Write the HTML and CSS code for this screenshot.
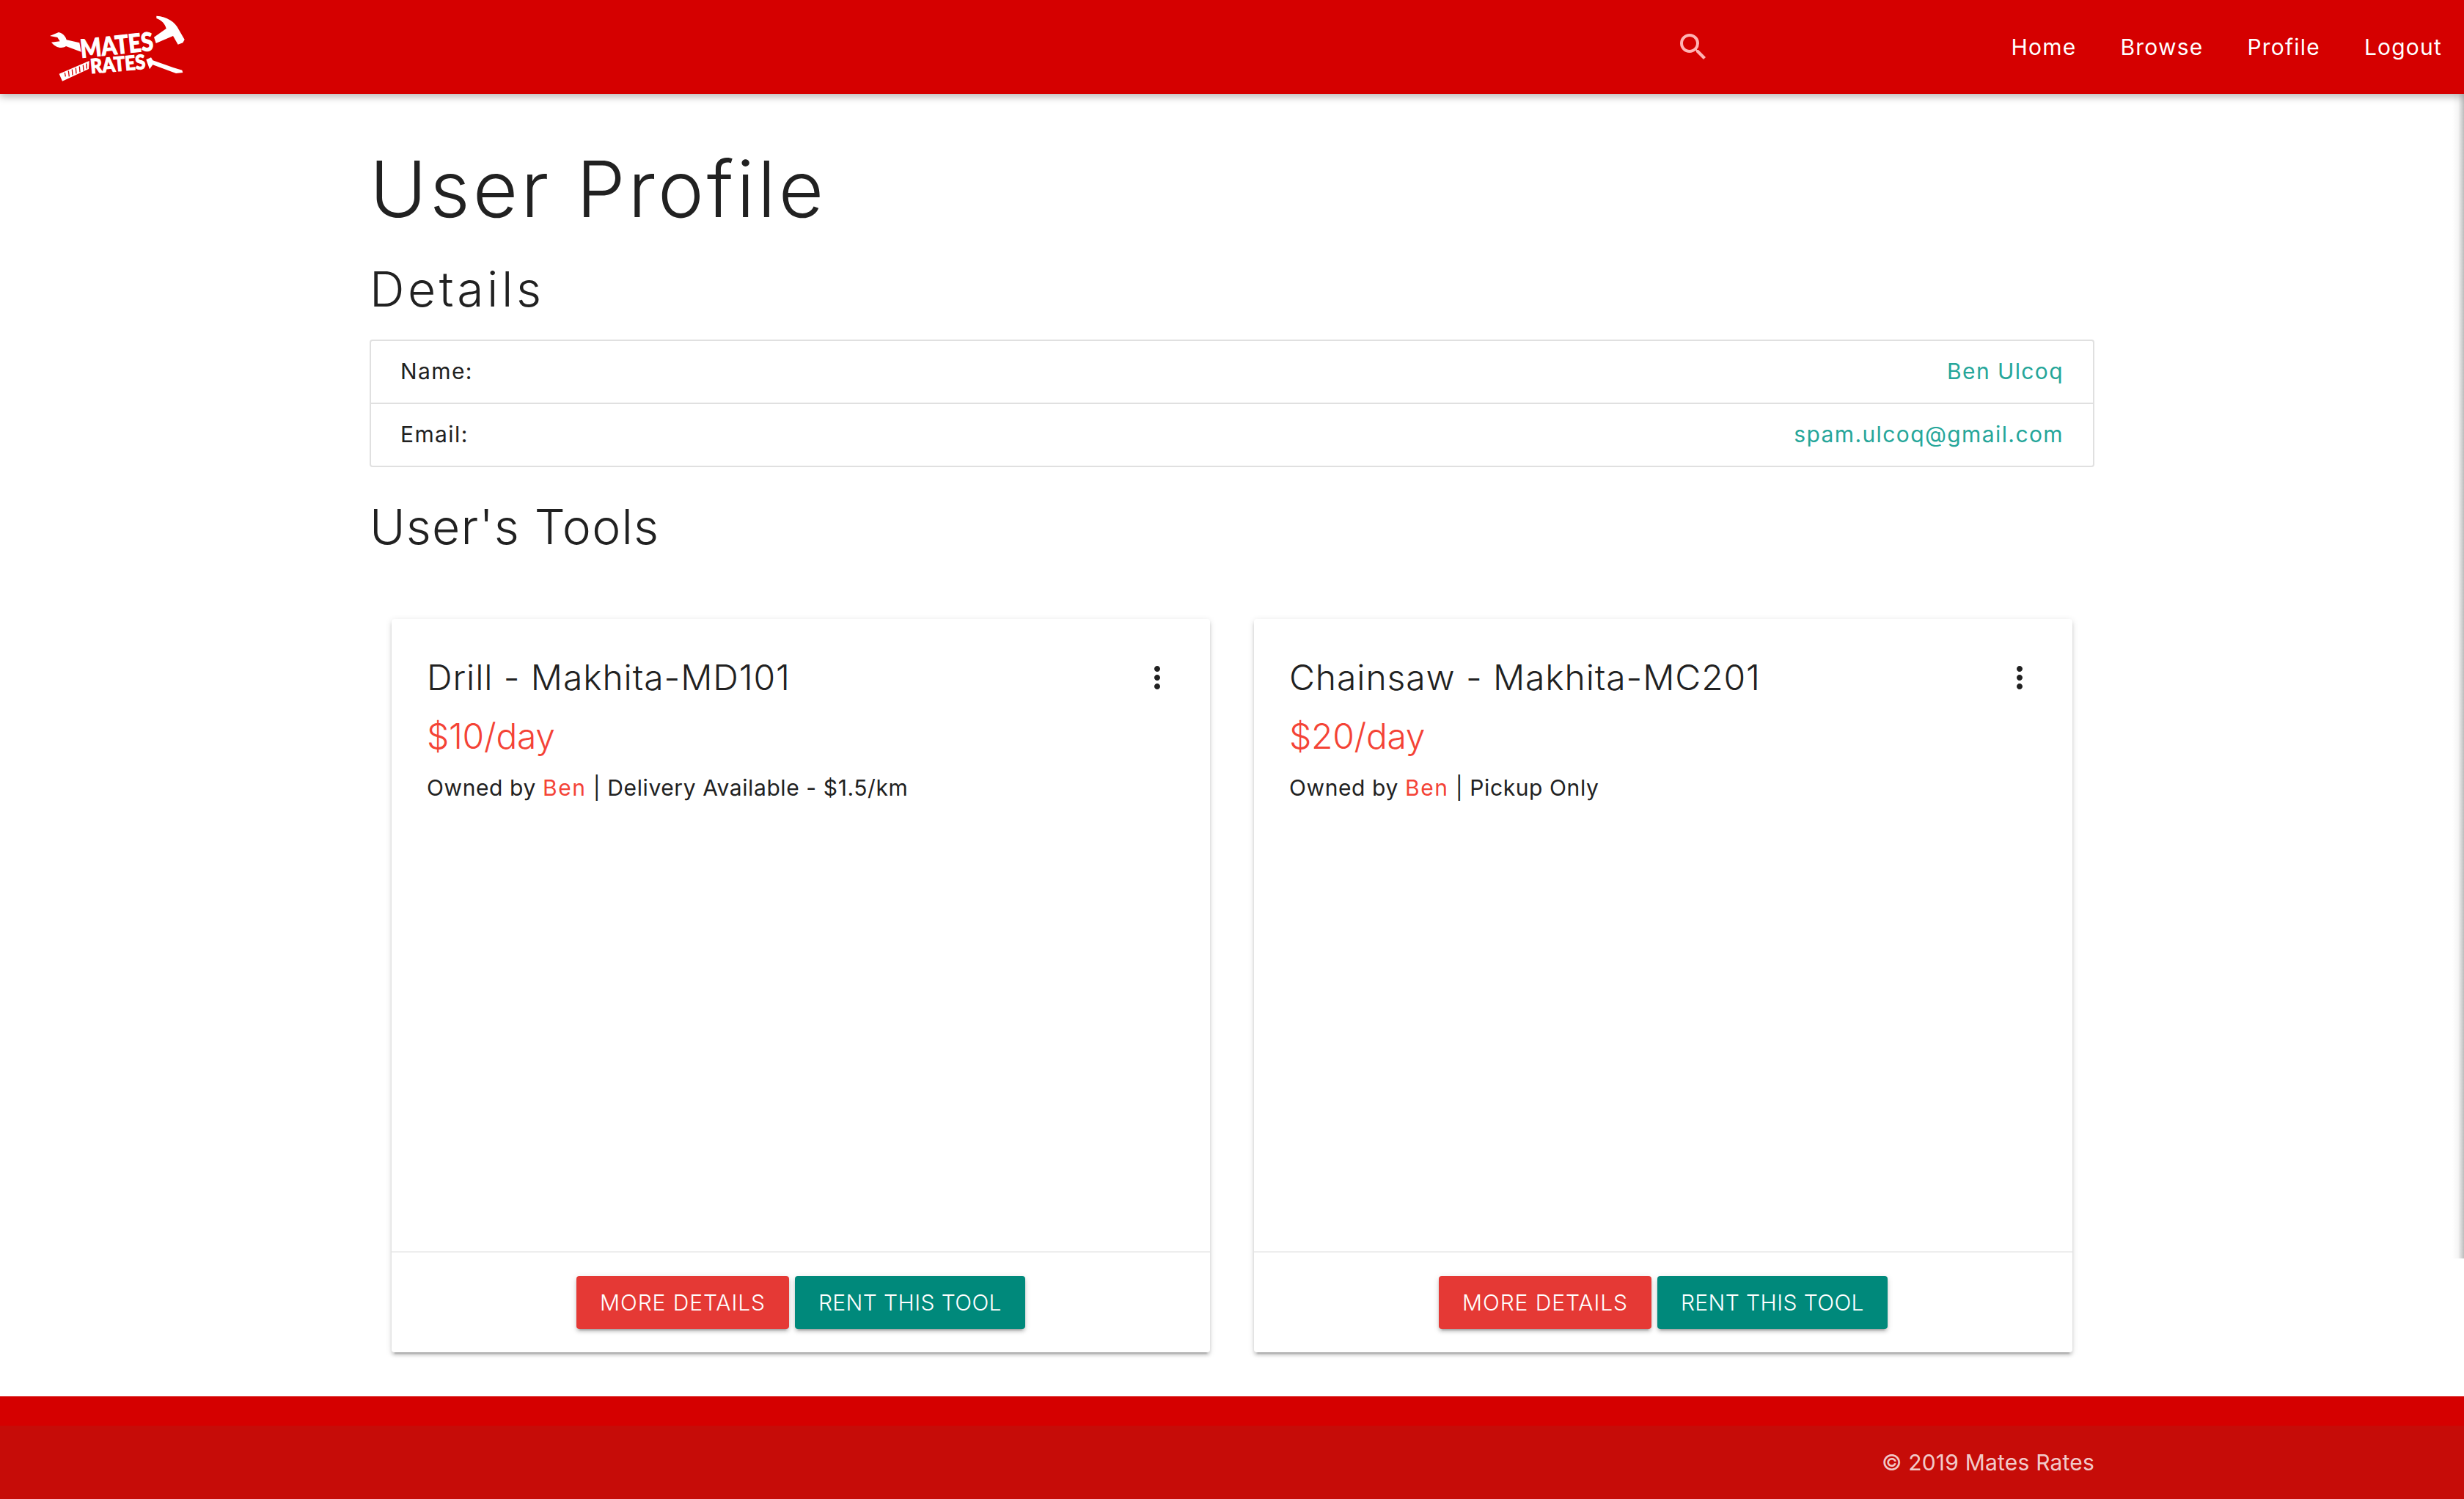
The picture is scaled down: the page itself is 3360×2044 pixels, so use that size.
FILE: index.html
```html
<!DOCTYPE html>
<html lang="en">
<head>
<meta charset="utf-8">
<title>Mates Rates</title>
<link rel="stylesheet" href="styles.css">
</head>
<body>
<div class="side-shadow"></div>
<nav class="navbar">
  <a class="brand" href="#" aria-label="Mates Rates">
    <svg class="logo" viewBox="0 0 720 390">
      <path class="logo-shape" d="M520 68C562 70 597 92 612 125L635 165L628 178L608 185L588 150L518 180L510 155L560 120C555 100 540 85 520 78Z"/>
      <path class="logo-shape" d="M84 150L120 135C140 140 150 155 152 166L205 178L212 215L150 192C130 205 105 195 90 176L125 172L115 156Z"/>
      <path class="logo-shape" d="M122 305L245 252L243 285L135 335Z"/>
      <path class="logo-tick" d="M145 300L148 316M160 293L163 316M175 287L177 310M190 281L192 304M205 275L207 298M220 269L222 292M233 263L235 284"/>
      <path class="logo-shape" d="M478 247L498 238L505 250L590 280L625 290L628 300L600 303L505 268L492 286Z"/>
      <text class="logo-text logo-mates" transform="translate(212 240) rotate(-6)" textLength="300" lengthAdjust="spacingAndGlyphs">MATES</text>
      <text class="logo-text logo-rates" transform="translate(252 304) rotate(-5)" textLength="226" lengthAdjust="spacingAndGlyphs">RATES</text>
    </svg>
  </a>
  <svg class="search-icon" viewBox="0 0 24 24"><path d="M15.5 14h-.79l-.28-.27A6.47 6.47 0 0 0 16 9.5 6.5 6.5 0 1 0 9.5 16c1.61 0 3.09-.59 4.23-1.57l.27.28v.79l5 4.99L20.49 19l-4.99-5zm-6 0C7.01 14 5 11.99 5 9.5S7.01 5 9.5 5 14 7.01 14 9.5 11.99 14 9.5 14z"/></svg>
  <ul class="nav-links">
    <li><a href="#">Home</a></li>
    <li><a href="#">Browse</a></li>
    <li><a href="#">Profile</a></li>
    <li><a href="#">Logout</a></li>
  </ul>
</nav>
<main class="container">
  <h1 class="page-title">User Profile</h1>
  <h2 class="section-title details-title">Details</h2>
  <ul class="collection">
    <li class="collection-row"><span>Name:</span><span class="accent">Ben Ulcoq</span></li>
    <li class="collection-row"><span>Email:</span><span class="accent">spam.ulcoq@gmail.com</span></li>
  </ul>
  <h2 class="section-title tools-title">User's Tools</h2>
  <div class="card-row">
    <article class="card">
      <div class="card-body">
        <div class="card-head">
          <h3 class="card-title">Drill - Makhita-MD101</h3>
          <svg class="more-icon" viewBox="0 0 24 24"><path d="M12 8c1.1 0 2-.9 2-2s-.9-2-2-2-2 .9-2 2 .9 2 2 2zm0 2c-1.1 0-2 .9-2 2s.9 2 2 2 2-.9 2-2-.9-2-2-2zm0 6c-1.1 0-2 .9-2 2s.9 2 2 2 2-.9 2-2-.9-2-2-2z"/></svg>
        </div>
        <p class="price">$10/day</p>
        <p class="meta">Owned by <a class="owner" href="#">Ben</a> | Delivery Available - $1.5/km</p>
      </div>
      <div class="card-actions">
        <a class="btn btn-red" href="#">MORE DETAILS</a>
        <a class="btn btn-teal" href="#">RENT THIS TOOL</a>
      </div>
    </article>
    <article class="card">
      <div class="card-body">
        <div class="card-head">
          <h3 class="card-title">Chainsaw - Makhita-MC201</h3>
          <svg class="more-icon" viewBox="0 0 24 24"><path d="M12 8c1.1 0 2-.9 2-2s-.9-2-2-2-2 .9-2 2 .9 2 2 2zm0 2c-1.1 0-2 .9-2 2s.9 2 2 2 2-.9 2-2-.9-2-2-2zm0 6c-1.1 0-2 .9-2 2s.9 2 2 2 2-.9 2-2-.9-2-2-2z"/></svg>
        </div>
        <p class="price">$20/day</p>
        <p class="meta">Owned by <a class="owner" href="#">Ben</a> | Pickup Only</p>
      </div>
      <div class="card-actions">
        <a class="btn btn-red" href="#">MORE DETAILS</a>
        <a class="btn btn-teal" href="#">RENT THIS TOOL</a>
      </div>
    </article>
  </div>
</main>
<footer class="footer">
  <div class="footer-copy"><span class="footer-text">© 2019 Mates Rates</span></div>
</footer>
</body>
</html>
```
FILE: styles.css
```css
* { box-sizing: border-box; }
html, body { margin: 0; padding: 0; }
body { font-family: "Inter", "Liberation Sans", sans-serif; color: #212121; background: #fff; height: 2044px; overflow: hidden; position: relative; }
a { text-decoration: none; color: inherit; }
ul { list-style: none; margin: 0; padding: 0; }
h1, h2, h3, p { margin: 0; font-weight: 300; }

.side-shadow { position: absolute; top: 0; right: 0; width: 16px; height: 1716px; background: linear-gradient(to right, rgba(0,0,0,0), rgba(0,0,0,.04) 50%, rgba(0,0,0,.26)); }

.navbar { height: 128px; background: #d50000; display: flex; align-items: center; box-shadow: 0 4px 10px rgba(0,0,0,.28); position: relative; }
.brand { display: block; width: 240px; height: 130px; margin-left: 40px; }
.logo { display: block; width: 240px; height: 130px; }
.logo-shape { fill: #fff; }
.logo-tick { stroke: #d50000; stroke-width: 4; fill: none; }
.logo-text { fill: #fff; stroke: #fff; stroke-width: 3px; font-family: "Lato", "Liberation Sans", sans-serif; font-weight: 900; }
.logo-mates { font-size: 104px; }
.logo-rates { font-size: 82px; }
.search-icon { width: 48px; height: 48px; fill: #ffb3b3; margin-left: 2005px; }
.nav-links { display: flex; margin-left: auto; }
.nav-links a { display: block; padding: 0 30px; font-size: 30px; line-height: 128px; color: #fff; font-weight: 400; letter-spacing: 1.2px; }

.container { width: 2352px; margin: 0 auto; }
.page-title { font-size: 106px; line-height: 132px; margin-top: 64px; letter-spacing: 4px; }
.section-title { font-size: 66px; line-height: 84px; }
.details-title { margin-top: 28px; letter-spacing: 4.5px; }
.tools-title { margin-top: 39px; letter-spacing: 1.2px; }
.collection { margin-top: 27px; border: 2px solid #e0e0e0; border-radius: 4px; }
.collection-row { display: flex; justify-content: space-between; align-items: center; height: 84px; padding: 0 40px 2px; font-size: 30px; font-weight: 400; letter-spacing: 1.4px; }
.collection-row + .collection-row { height: 86px; border-top: 2px solid #e0e0e0; }
.accent { color: #26a69a; }

.card-row { display: flex; gap: 60px; padding: 0 30px; margin-top: 84px; }
.card { flex: 1; height: 1000px; display: flex; flex-direction: column; background: #fff; border-radius: 4px; box-shadow: 0 4px 4px rgba(0,0,0,.14), 0 6px 2px -4px rgba(0,0,0,.2), 0 2px 10px rgba(0,0,0,.12); }
.card-body { flex: 1; padding: 48px; border-bottom: 2px solid #eee; }
.card-head { display: flex; justify-content: space-between; align-items: center; height: 64px; }
.card-title { font-size: 48px; line-height: 64px; font-weight: 300; letter-spacing: .9px; }
.more-icon { width: 48px; height: 48px; fill: #212121; }
.price { font-size: 48px; line-height: 64px; color: #f44336; margin-top: 16px; letter-spacing: -.3px; }
.meta { font-size: 30px; line-height: 40px; margin-top: 18px; font-weight: 400; letter-spacing: .6px; }
.owner { color: #f44336; letter-spacing: 1.6px; }

.card-actions { display: flex; justify-content: center; gap: 8px; padding: 32px 0; }
.btn { display: block; height: 72px; line-height: 72px; padding: 0 32px; border-radius: 4px; font-size: 30px; font-weight: 300; color: #fff; box-shadow: 0 4px 4px rgba(0,0,0,.14), 0 6px 2px -4px rgba(0,0,0,.2), 0 2px 10px rgba(0,0,0,.12); }
.btn-red { background: #e53935; letter-spacing: .9px; }
.btn-teal { background: #00897b; letter-spacing: .4px; }

.footer { margin-top: 60px; height: 140px; padding-top: 40px; background: #d50000; }
.footer-copy { height: 100px; background: #c60c08; display: flex; justify-content: flex-end; align-items: center; padding-right: 504px; }
.footer-text { font-size: 30px; color: rgba(255,255,255,.8); letter-spacing: .2px; }
```
